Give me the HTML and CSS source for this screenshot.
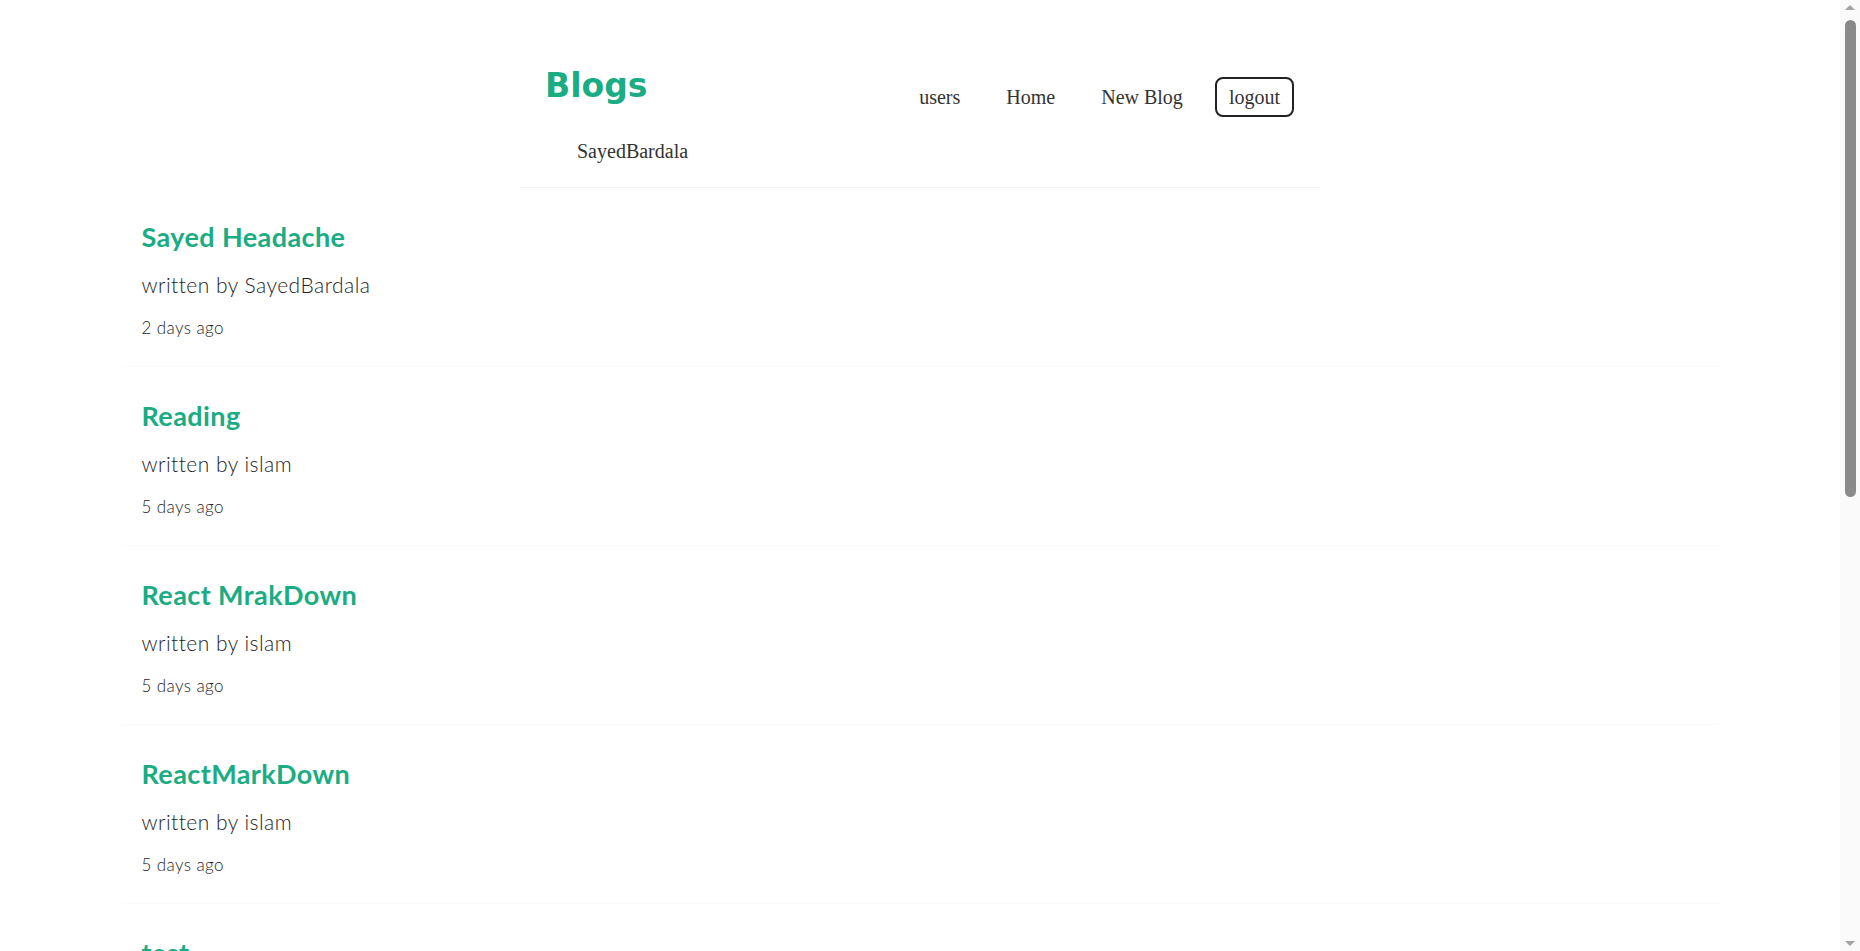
FILE: index.html
```html
<!DOCTYPE html>
<html lang="en">
<head>
<meta charset="utf-8">
<title>Blogs</title>
<link rel="stylesheet" href="styles.css">
</head>
<body>
<div class="page">
  <header class="navbar">
    <div class="navbar-row">
      <h1 class="brand">Blogs</h1>
      <nav class="links">
        <a class="nav-link" href="#">users</a>
        <a class="nav-link" href="#">Home</a>
        <a class="nav-link" href="#">New Blog</a>
        <button class="nav-link logout" type="button">logout</button>
      </nav>
    </div>
    <div class="user">SayedBardala</div>
  </header>

  <main class="blog-list">
    <article class="blog-preview">
      <h2 class="blog-title">Sayed Headache</h2>
      <p class="blog-author">written by SayedBardala</p>
      <p class="blog-date">2 days ago</p>
    </article>
    <article class="blog-preview">
      <h2 class="blog-title">Reading</h2>
      <p class="blog-author">written by islam</p>
      <p class="blog-date">5 days ago</p>
    </article>
    <article class="blog-preview">
      <h2 class="blog-title">React MrakDown</h2>
      <p class="blog-author">written by islam</p>
      <p class="blog-date">5 days ago</p>
    </article>
    <article class="blog-preview">
      <h2 class="blog-title">ReactMarkDown</h2>
      <p class="blog-author">written by islam</p>
      <p class="blog-date">5 days ago</p>
    </article>
    <article class="blog-preview">
      <h2 class="blog-title">test</h2>
      <p class="blog-author">written by islam</p>
      <p class="blog-date">6 days ago</p>
    </article>
    <article class="blog-preview">
      <h2 class="blog-title">My first blog</h2>
      <p class="blog-author">written by islam</p>
      <p class="blog-date">7 days ago</p>
    </article>
    <article class="blog-preview">
      <h2 class="blog-title">Hello World</h2>
      <p class="blog-author">written by SayedBardala</p>
      <p class="blog-date">8 days ago</p>
    </article>
    <article class="blog-preview">
      <h2 class="blog-title">Learning Node</h2>
      <p class="blog-author">written by islam</p>
      <p class="blog-date">9 days ago</p>
    </article>
    <article class="blog-preview">
      <h2 class="blog-title">Welcome</h2>
      <p class="blog-author">written by SayedBardala</p>
      <p class="blog-date">10 days ago</p>
    </article>
  </main>
</div>

<div class="scrollbar" aria-hidden="true">
  <span class="scroll-arrow up"></span>
  <div class="scroll-track">
    <div class="scroll-thumb"></div>
  </div>
  <span class="scroll-arrow down"></span>
</div>
</body>
</html>
```

FILE: styles.css
```css
html, body {
  margin: 0;
  padding: 0;
  background: #ffffff;
}

body {
  font-family: "Lato", "Open Sans", sans-serif;
  color: #333333;
}

.page {
  padding-right: 20px;
  padding-bottom: 33px;
}

/* ---------- Navbar ---------- */
.navbar {
  max-width: 800px;
  margin: 0 auto;
  box-sizing: border-box;
  padding: 64px 26px 24px 25px;
  border-bottom: 1px solid #f2f2f2;
}

.navbar-row {
  display: flex;
  align-items: flex-start;
}

.brand {
  margin: 2px 0 0;
  font-family: "DejaVu Sans", "Lato", sans-serif;
  font-size: 33px;
  line-height: 40px;
  font-weight: 700;
  color: #1aac83;
}

.links {
  margin-left: auto;
  margin-top: 13px;
  display: flex;
  align-items: center;
}

.nav-link {
  margin-left: 18px;
  padding: 6px 12px;
  border: 2px solid transparent;
  font-family: "Liberation Serif", "Times New Roman", serif;
  font-size: 20px;
  line-height: 24px;
  color: #333333;
  text-decoration: none;
  background: transparent;
}

.logout {
  border-color: #222222;
  border-radius: 8px;
  cursor: pointer;
}

.user {
  margin-top: 23px;
  padding-left: 32px;
  font-family: "Liberation Serif", "Times New Roman", serif;
  font-size: 20px;
  line-height: 23px;
  color: #333333;
}

/* ---------- Blog list ---------- */
.blog-list {
  max-width: 1597px;
  margin: 0 auto;
}

.blog-preview {
  padding: 33px 20px 28px;
  border-bottom: 1px solid #fafafa;
}

.blog-title {
  margin: 0;
  font-size: 27px;
  line-height: 32px;
  font-weight: 700;
  letter-spacing: 0.4px;
  color: #1aac83;
}

.blog-author {
  margin: 19px 0 0;
  font-size: 21px;
  line-height: 26px;
  font-weight: 300;
  letter-spacing: 0.47px;
  color: #1e1e1e;
}

.blog-date {
  margin: 20px 0 0;
  font-size: 17px;
  line-height: 20px;
  font-weight: 300;
  letter-spacing: 0.4px;
  color: #1e1e1e;
}

/* ---------- Browser scrollbar (drawn) ---------- */
.scrollbar {
  position: fixed;
  top: 0;
  right: 0;
  width: 20px;
  height: 100vh;
  background: #fafafa;
  display: flex;
  flex-direction: column;
  align-items: center;
}

.scroll-arrow {
  width: 0;
  height: 0;
  border-left: 5px solid transparent;
  border-right: 5px solid transparent;
}

.scroll-arrow.up {
  margin-top: 5px;
  border-bottom: 5px solid #a3a3a3;
}

.scroll-arrow.down {
  margin-bottom: 5px;
  border-top: 5px solid #a3a3a3;
}

.scroll-track {
  flex: 1;
  width: 100%;
  display: flex;
  justify-content: center;
  padding-top: 10px;
}

.scroll-thumb {
  width: 11px;
  height: 477px;
  border-radius: 6px;
  background: #8a8a8a;
}
```
